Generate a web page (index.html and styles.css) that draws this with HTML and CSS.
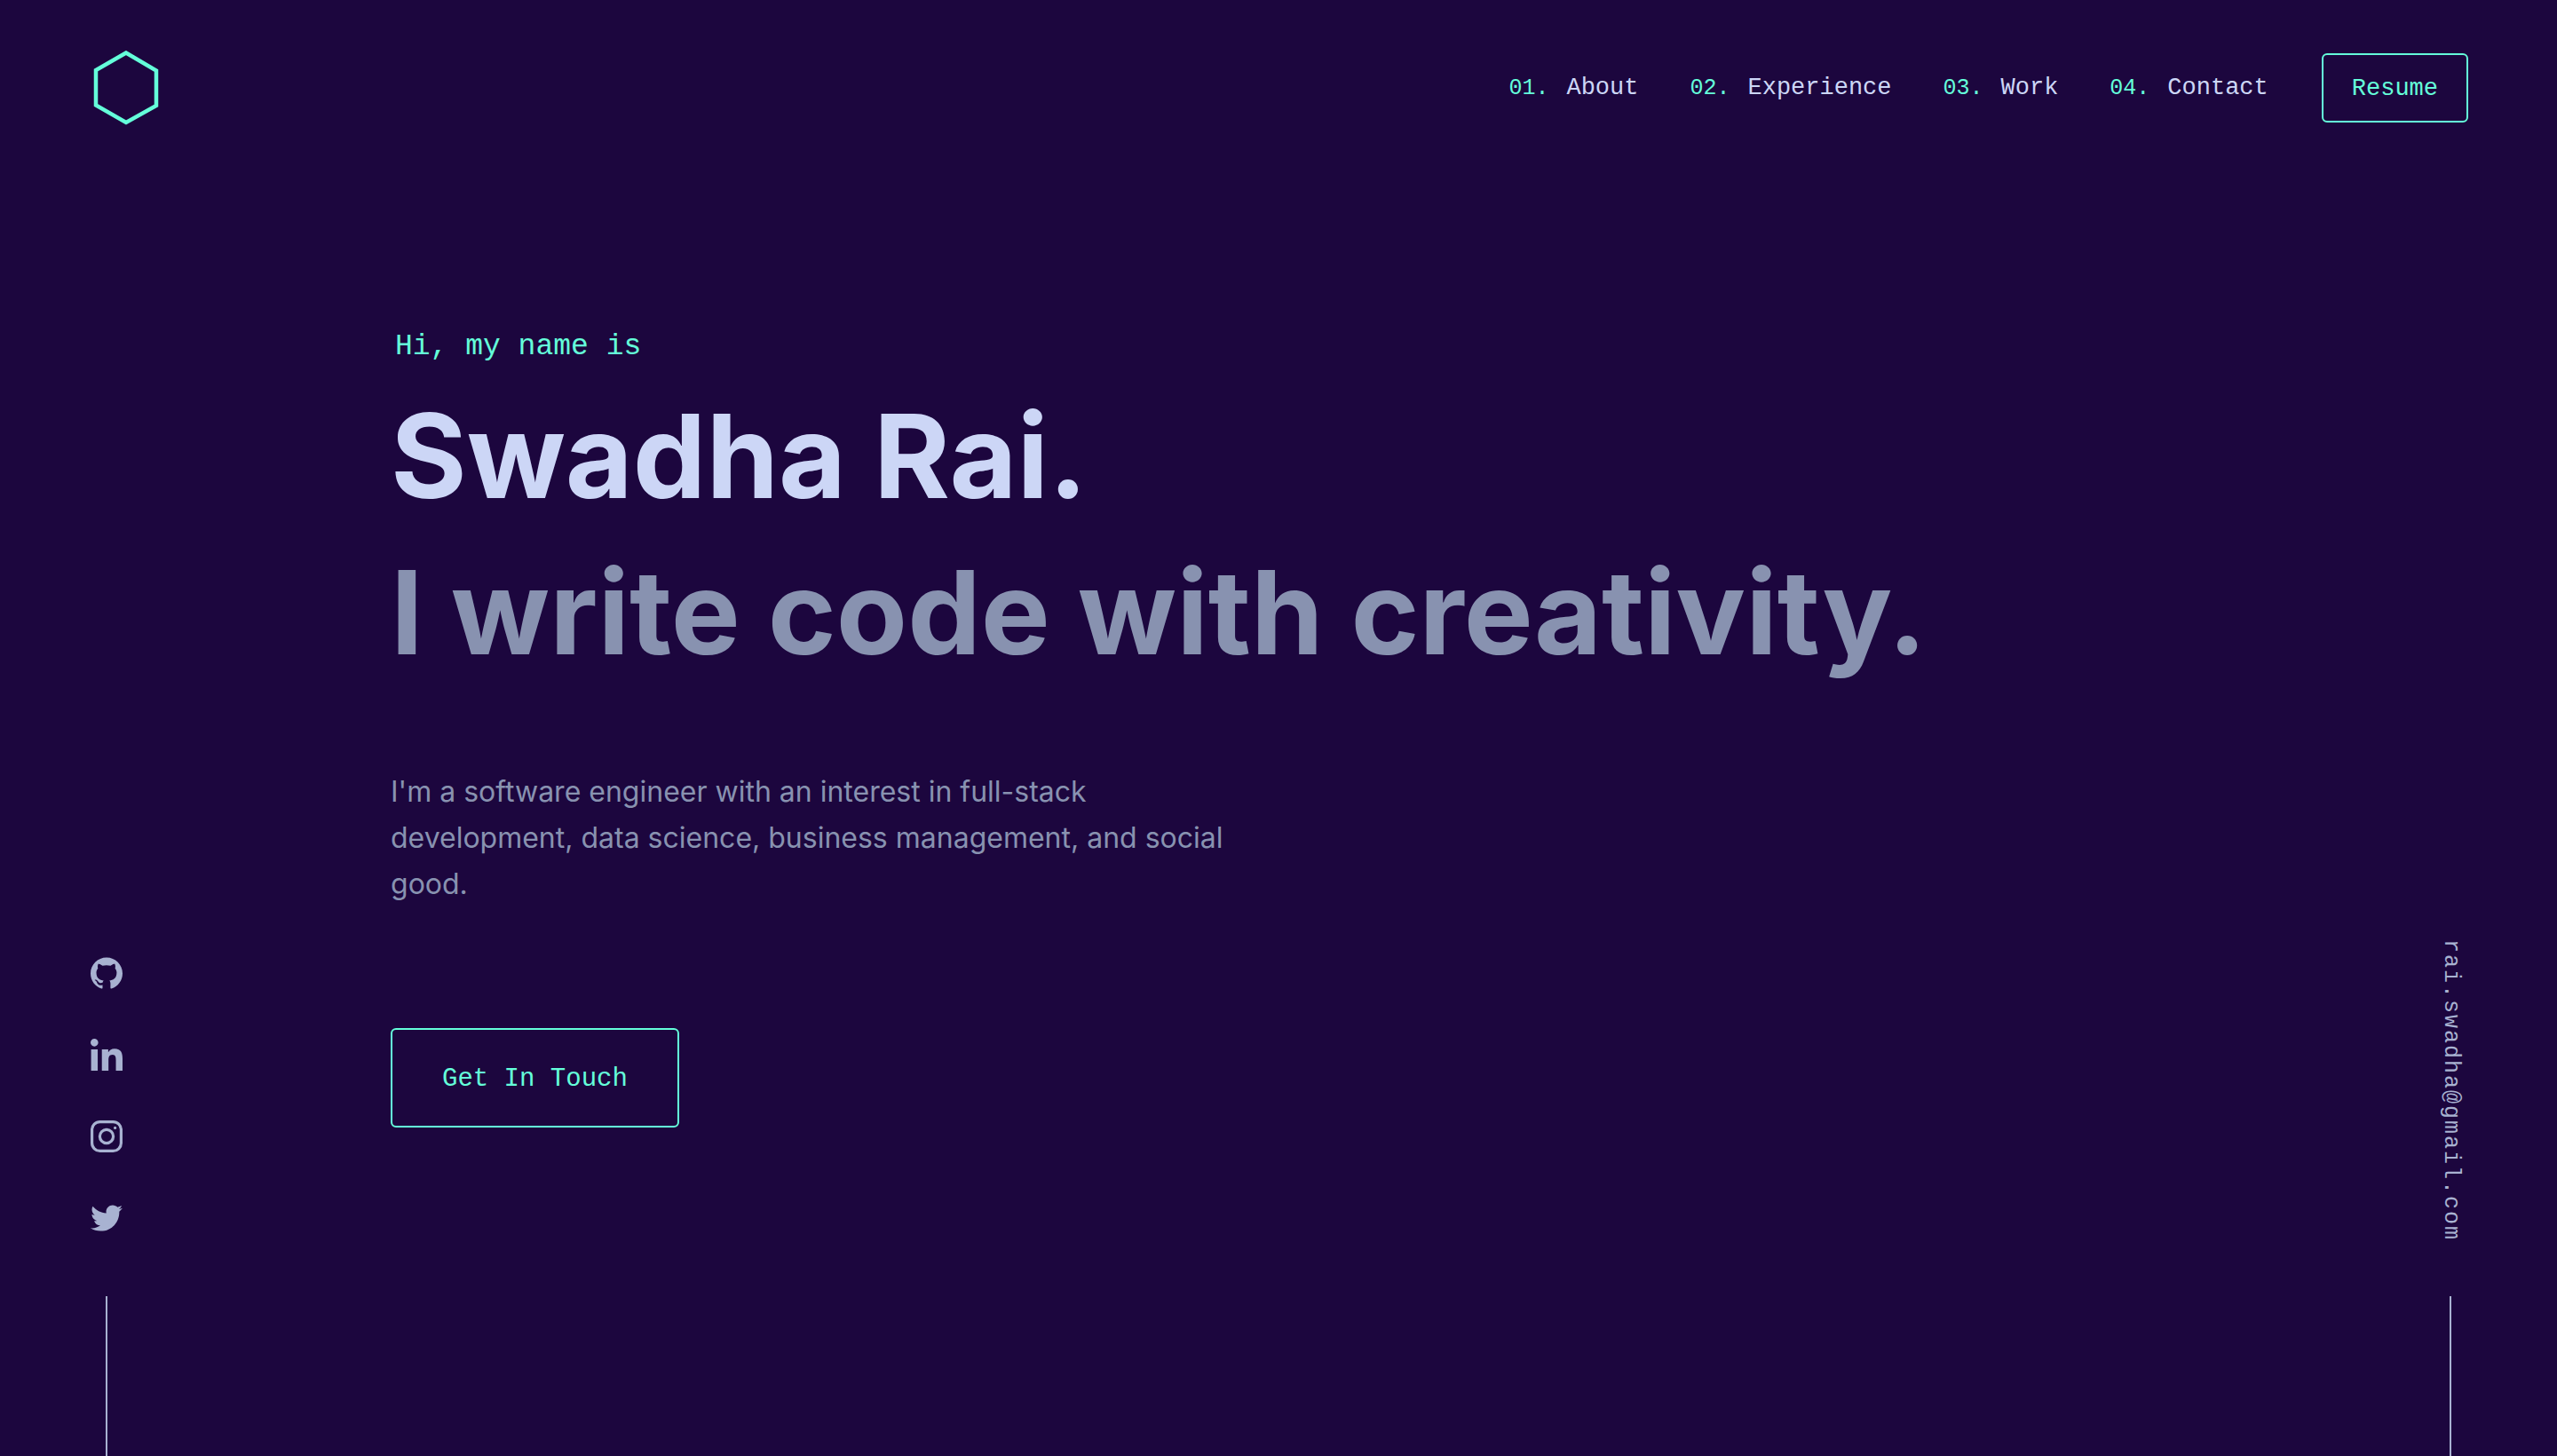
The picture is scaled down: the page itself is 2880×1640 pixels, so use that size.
FILE: index.html
```html
<!DOCTYPE html>
<html lang="en">
<head>
  <meta charset="utf-8">
  <meta name="viewport" content="width=device-width, initial-scale=1">
  <title>Swadha Rai</title>
  <link rel="stylesheet" href="styles.css">
</head>
<body>
  <header class="header">
    <a class="logo" href="#home" aria-label="Home">
      <svg class="logo-mark" viewBox="0 0 84 84" aria-hidden="true">
        <polygon points="42,2.5 8,22 8,61.5 42,81 76,62 76,22.5"/>
      </svg>
    </a>
    <nav class="nav">
      <ol class="nav-list">
        <li><a class="nav-link" href="#about"><span class="nav-number">01.</span>About</a></li>
        <li><a class="nav-link" href="#experience"><span class="nav-number">02.</span>Experience</a></li>
        <li><a class="nav-link" href="#work"><span class="nav-number">03.</span>Work</a></li>
        <li><a class="nav-link" href="#contact"><span class="nav-number">04.</span>Contact</a></li>
      </ol>
      <a class="button button-small" href="#resume">Resume</a>
    </nav>
  </header>

  <div class="page">
    <aside class="rail">
      <ul class="social">
        <li>
          <a class="social-link" href="#github" aria-label="GitHub">
            <svg class="icon" viewBox="0 0 24 24" aria-hidden="true"><path d="M12 .297c-6.63 0-12 5.373-12 12 0 5.303 3.438 9.8 8.205 11.385.6.113.82-.258.82-.577 0-.285-.01-1.04-.015-2.04-3.338.724-4.042-1.61-4.042-1.61C4.422 18.07 3.633 17.7 3.633 17.7c-1.087-.744.084-.729.084-.729 1.205.084 1.838 1.236 1.838 1.236 1.07 1.835 2.809 1.305 3.495.998.108-.776.417-1.305.76-1.605-2.665-.3-5.466-1.332-5.466-5.93 0-1.31.465-2.38 1.235-3.22-.135-.303-.54-1.523.105-3.176 0 0 1.005-.322 3.3 1.23.96-.267 1.98-.399 3-.405 1.02.006 2.04.138 3 .405 2.28-1.552 3.285-1.23 3.285-1.23.645 1.653.24 2.873.12 3.176.765.84 1.23 1.91 1.23 3.22 0 4.61-2.805 5.625-5.475 5.92.42.36.81 1.096.81 2.22 0 1.606-.015 2.896-.015 3.286 0 .315.21.69.825.57C20.565 22.092 24 17.592 24 12.297c0-6.627-5.373-12-12-12"/></svg>
          </a>
        </li>
        <li>
          <a class="social-link" href="#linkedin" aria-label="LinkedIn">
            <svg class="icon" viewBox="0 0 448 448" aria-hidden="true"><path d="M100.28 448H7.4V148.9h92.88zM53.79 108.1C24.09 108.1 0 83.5 0 53.8a53.79 53.79 0 0 1 107.58 0c0 29.7-24.1 54.3-53.79 54.3zM447.9 448h-92.68V302.4c0-34.7-.7-79.2-48.29-79.2-48.29 0-55.69 37.7-55.69 76.7V448h-92.78V148.9h89.08v40.8h1.3c12.4-23.5 42.69-48.3 87.88-48.3 94 0 111.28 61.9 111.28 142.3V448z"/></svg>
          </a>
        </li>
        <li>
          <a class="social-link" href="#instagram" aria-label="Instagram">
            <svg class="icon" viewBox="0 0 36 36" aria-hidden="true">
              <rect class="icon-stroke" x="1.6" y="1.6" width="32.8" height="32.8" rx="9"/>
              <circle class="icon-stroke" cx="18" cy="18" r="7.6"/>
              <circle cx="27.6" cy="8.4" r="1.6"/>
            </svg>
          </a>
        </li>
        <li>
          <a class="social-link" href="#twitter" aria-label="Twitter">
            <svg class="icon" viewBox="0 0 512 512" aria-hidden="true"><path d="M459.37 151.716c.325 4.548.325 9.097.325 13.645 0 138.72-105.583 298.558-298.558 298.558-59.452 0-114.68-17.219-161.137-47.106 8.447.974 16.568 1.299 25.34 1.299 49.055 0 94.213-16.568 130.274-44.832-46.132-.975-84.792-31.188-98.112-72.772 6.498.974 12.995 1.624 19.818 1.624 9.421 0 18.843-1.3 27.614-3.573-48.081-9.747-84.143-51.98-84.143-102.985v-1.299c13.969 7.797 30.214 12.67 47.431 13.319-28.264-18.843-46.781-51.005-46.781-87.391 0-19.492 5.197-37.36 14.294-52.954 51.655 63.675 129.3 105.258 216.365 109.807-1.624-7.797-2.599-15.918-2.599-24.04 0-57.828 46.782-104.934 104.934-104.934 30.213 0 57.502 12.67 76.67 33.137 23.715-4.548 46.456-13.32 66.599-25.34-7.798 24.366-24.366 44.833-46.132 57.827 21.117-2.273 41.584-8.122 60.426-16.243-14.292 20.791-32.161 39.308-52.628 54.253z"/></svg>
          </a>
        </li>
      </ul>
    </aside>

    <main class="hero">
      <p class="greeting">Hi, my name is</p>
      <h1 class="headline">Swadha Rai.</h1>
      <h2 class="headline headline-muted">I write code with creativity.</h2>
      <p class="intro">I'm a software engineer with an interest in full-stack development, data science, business management, and social good.</p>
      <a class="button button-large" href="#contact">Get In Touch</a>
    </main>

    <aside class="rail">
      <a class="email" href="mailto:rai.swadha@gmail.com">rai.swadha@gmail.com</a>
    </aside>
  </div>
</body>
</html>
```
FILE: styles.css
```css
:root {
  --background: #1c063e;
  --accent: #64ffda;
  --lightest: #ccd6f6;
  --light: #a8b2d1;
  --muted: #8892b0;
  --sans: Inter, "Liberation Sans", sans-serif;
  --mono: "Liberation Mono", monospace;
}

* {
  box-sizing: border-box;
}

body {
  display: flex;
  flex-direction: column;
  min-height: 100vh;
  margin: 0;
  background: var(--background);
  color: var(--muted);
  font-family: var(--sans);
}

a {
  color: inherit;
  text-decoration: none;
}

ol,
ul {
  margin: 0;
  padding: 0;
  list-style: none;
}

/* Header */
.header {
  display: flex;
  align-items: center;
  justify-content: space-between;
  min-height: 198px;
  padding: 0 100px;
}

.logo-mark {
  display: block;
  width: 84px;
  height: 84px;
  fill: none;
  stroke: var(--accent);
  stroke-width: 4.5;
}

.nav {
  display: flex;
  align-items: center;
  gap: 60px;
  font-family: var(--mono);
  font-size: 27px;
  line-height: 32px;
}

.nav-list {
  display: flex;
  align-items: center;
  gap: 58px;
}

.nav-link {
  display: flex;
  align-items: baseline;
  gap: 20px;
  color: var(--lightest);
}

.nav-number {
  color: var(--accent);
  font-size: 25px;
}

.button {
  display: inline-block;
  border: 2px solid var(--accent);
  border-radius: 6px;
  color: var(--accent);
  font-family: var(--mono);
}

.button-small {
  padding: 22px 32px 20px;
}

.button-large {
  padding: 38px 56px 34px;
  font-size: 29px;
  line-height: 36px;
}

/* Page columns */
.page {
  display: grid;
  flex: 1;
  grid-template-columns: 80px minmax(0, 2000px) 80px;
  justify-content: space-between;
  padding: 0 80px;
}

.rail {
  display: flex;
  flex-direction: column;
  align-items: center;
  justify-content: flex-end;
  color: var(--light);
}

.rail::after {
  width: 2px;
  height: 180px;
  background: var(--light);
  content: "";
}

.social {
  display: flex;
  flex-direction: column;
  gap: 56px;
  margin-bottom: 70px;
}

.social-link,
.icon {
  display: block;
}

.icon {
  width: 36px;
  height: 36px;
  fill: currentColor;
}

.icon-stroke {
  fill: none;
  stroke: currentColor;
  stroke-width: 3.2;
}

.email {
  margin-bottom: 62px;
  font-family: var(--mono);
  font-size: 25px;
  letter-spacing: 2px;
  line-height: 32px;
  writing-mode: vertical-rl;
}

/* Hero */
.hero {
  padding: 173px 0 100px;
}

.greeting {
  margin: 0 0 15px 5px;
  color: var(--accent);
  font-family: var(--mono);
  font-size: 33px;
  line-height: 40px;
}

.headline {
  margin: 0;
  color: var(--lightest);
  font-size: 131px;
  font-weight: 700;
  line-height: 176px;
}

.headline-muted {
  color: var(--muted);
}

.intro {
  max-width: 960px;
  margin: 88px 0 136px;
  font-size: 32px;
  line-height: 52px;
}
```
